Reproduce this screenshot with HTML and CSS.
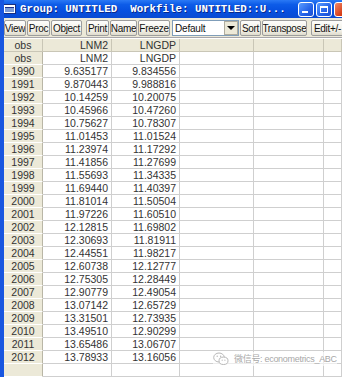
FILE: index.html
```html
<!DOCTYPE html>
<html>
<head>
<meta charset="utf-8">
<link rel="stylesheet" href="styles.css">
</head>
<body>
<div class="win">
  <div class="titlebar">
    <span class="ticon"><span class="tin"></span></span>
    <span class="ttext">Group: UNTITLED  Workfile: UNTITLED::U...</span>
    <span class="wbtns">
      <span class="wb wmin"><span class="minbar"></span></span>
      <span class="wb wmax"><span class="maxbox"></span></span>
      <span class="wb wclose"></span>
    </span>
  </div>
  <div class="toolbar">
    <span class="btn w22">View</span>
    <span class="btn w23">Proc</span>
    <span class="btn w31">Object</span>
    <span class="btn w23 gap4">Print</span>
    <span class="btn w27">Name</span>
    <span class="btn w32">Freeze</span>
    <span class="combo"><span class="ctext">Default</span><span class="carrow"><span class="tri"></span></span></span>
    <span class="btn w21">Sort</span>
    <span class="btn w45">Transpose</span>
    <span class="btn w33 gap4">Edit+/-</span>
    <span class="btn w10 gap2"></span>
  </div>
  <div class="grid" id="grid">
    <div class="row head"><div class="c obs">obs</div><div class="c">LNM2</div><div class="c">LNGDP</div><div class="c"></div><div class="c"></div><div class="c"></div></div>
    <div class="row"><div class="c obs">obs</div><div class="c">LNM2</div><div class="c">LNGDP</div><div class="c"></div><div class="c"></div><div class="c"></div></div>
    <div class="row"><div class="c obs">1990</div><div class="c">9.635177</div><div class="c">9.834556</div><div class="c"></div><div class="c"></div><div class="c"></div></div>
    <div class="row"><div class="c obs">1991</div><div class="c">9.870443</div><div class="c">9.988816</div><div class="c"></div><div class="c"></div><div class="c"></div></div>
    <div class="row"><div class="c obs">1992</div><div class="c">10.14259</div><div class="c">10.20075</div><div class="c"></div><div class="c"></div><div class="c"></div></div>
    <div class="row"><div class="c obs">1993</div><div class="c">10.45966</div><div class="c">10.47260</div><div class="c"></div><div class="c"></div><div class="c"></div></div>
    <div class="row"><div class="c obs">1994</div><div class="c">10.75627</div><div class="c">10.78307</div><div class="c"></div><div class="c"></div><div class="c"></div></div>
    <div class="row"><div class="c obs">1995</div><div class="c">11.01453</div><div class="c">11.01524</div><div class="c"></div><div class="c"></div><div class="c"></div></div>
    <div class="row"><div class="c obs">1996</div><div class="c">11.23974</div><div class="c">11.17292</div><div class="c"></div><div class="c"></div><div class="c"></div></div>
    <div class="row"><div class="c obs">1997</div><div class="c">11.41856</div><div class="c">11.27699</div><div class="c"></div><div class="c"></div><div class="c"></div></div>
    <div class="row"><div class="c obs">1998</div><div class="c">11.55693</div><div class="c">11.34335</div><div class="c"></div><div class="c"></div><div class="c"></div></div>
    <div class="row"><div class="c obs">1999</div><div class="c">11.69440</div><div class="c">11.40397</div><div class="c"></div><div class="c"></div><div class="c"></div></div>
    <div class="row"><div class="c obs">2000</div><div class="c">11.81014</div><div class="c">11.50504</div><div class="c"></div><div class="c"></div><div class="c"></div></div>
    <div class="row"><div class="c obs">2001</div><div class="c">11.97226</div><div class="c">11.60510</div><div class="c"></div><div class="c"></div><div class="c"></div></div>
    <div class="row"><div class="c obs">2002</div><div class="c">12.12815</div><div class="c">11.69802</div><div class="c"></div><div class="c"></div><div class="c"></div></div>
    <div class="row"><div class="c obs">2003</div><div class="c">12.30693</div><div class="c">11.81911</div><div class="c"></div><div class="c"></div><div class="c"></div></div>
    <div class="row"><div class="c obs">2004</div><div class="c">12.44551</div><div class="c">11.98217</div><div class="c"></div><div class="c"></div><div class="c"></div></div>
    <div class="row"><div class="c obs">2005</div><div class="c">12.60738</div><div class="c">12.12777</div><div class="c"></div><div class="c"></div><div class="c"></div></div>
    <div class="row"><div class="c obs">2006</div><div class="c">12.75305</div><div class="c">12.28449</div><div class="c"></div><div class="c"></div><div class="c"></div></div>
    <div class="row"><div class="c obs">2007</div><div class="c">12.90779</div><div class="c">12.49054</div><div class="c"></div><div class="c"></div><div class="c"></div></div>
    <div class="row"><div class="c obs">2008</div><div class="c">13.07142</div><div class="c">12.65729</div><div class="c"></div><div class="c"></div><div class="c"></div></div>
    <div class="row"><div class="c obs">2009</div><div class="c">13.31501</div><div class="c">12.73935</div><div class="c"></div><div class="c"></div><div class="c"></div></div>
    <div class="row"><div class="c obs">2010</div><div class="c">13.49510</div><div class="c">12.90299</div><div class="c"></div><div class="c"></div><div class="c"></div></div>
    <div class="row"><div class="c obs">2011</div><div class="c">13.65486</div><div class="c">13.06707</div><div class="c"></div><div class="c"></div><div class="c"></div></div>
    <div class="row"><div class="c obs">2012</div><div class="c">13.78933</div><div class="c">13.16056</div><div class="c"></div><div class="c"></div><div class="c"></div></div>
    <div class="row"><div class="c obs"></div><div class="c"></div><div class="c"></div><div class="c"></div><div class="c"></div><div class="c"></div></div>
    <div class="watermark">
      <svg width="16" height="14" viewBox="0 0 16 14">
        <ellipse cx="6" cy="5.5" rx="5.3" ry="4.5" fill="none" stroke="#b8b8b8" stroke-width="1"/>
        <ellipse cx="10.5" cy="8.8" rx="4.5" ry="3.7" fill="#fff" stroke="#b8b8b8" stroke-width="1"/>
        <circle cx="4.2" cy="4.2" r="0.7" fill="#b8b8b8"/>
        <circle cx="7.6" cy="4.2" r="0.7" fill="#b8b8b8"/>
        <circle cx="9.2" cy="8.2" r="0.6" fill="#b8b8b8"/>
        <circle cx="11.9" cy="8.2" r="0.6" fill="#b8b8b8"/>
      </svg>
      <span class="wmtext">微信号: econometrics_ABC</span>
    </div>
  </div>
</div>
</body>
</html>
```
FILE: styles.css
```css
html, body { margin: 0; padding: 0; background: #fff; }
body { width: 342px; height: 377px; overflow: hidden; font-family: "Liberation Sans", Arial, sans-serif; }
.win {
  width: 342px; height: 377px; overflow: hidden;
  display: flex; flex-direction: column;
  border-left: 4px solid #1856e0;
  box-sizing: border-box;
  background: #fff;
}
.titlebar {
  height: 18px; flex: none;
  margin-left: -4px;
  display: flex; align-items: center;
  background: linear-gradient(#2a79f5 0%, #0d5ce8 25%, #0650e0 60%, #0a4bd2 100%);
  color: #fff;
}
.ticon {
  width: 13px; height: 10px; margin-left: 3px; flex: none;
  background: #fff; border: 1px solid #1a2f80; box-sizing: border-box;
  display: flex; padding: 2px 1px 1px 1px;
}
.tin { flex: 1; background: #7f9ed8; border-top: 1px solid #20308a; }
.ttext {
  margin-left: 4px; font-family: "Liberation Mono", "Courier New", monospace;
  font-weight: bold; font-size: 10.8px; white-space: pre; letter-spacing: 0;
  text-shadow: 1px 1px 0 #0a2a8a;
  flex: 1; overflow: hidden;
}
.wbtns { display: flex; gap: 2px; margin-right: -8px; flex: none; }
.wb {
  width: 16px; height: 15px; box-sizing: border-box;
  border: 1px solid #fff; border-radius: 3px;
  background: linear-gradient(135deg, #5a9cff, #2563e8 60%, #1d50d0);
  display: flex; align-items: center; justify-content: center;
}
.wmin { align-items: flex-end; }
.minbar { width: 6px; height: 2px; background: #fff; margin-bottom: 3px; margin-right: 3px; }
.maxbox { width: 8px; height: 7px; border: 1px solid #fff; border-top-width: 2px; box-sizing: border-box; }
.wclose { background: linear-gradient(135deg, #f08a6a, #d8401a 60%, #c03010); }

.toolbar {
  height: 20px; flex: none; box-sizing: border-box;
  display: flex; align-items: center; gap: 1px;
  background: #ece9d8;
  padding-top: 1px;
  border-bottom: 1px solid #a7a6aa;
  white-space: nowrap; overflow: hidden;
}
.btn {
  height: 16px; box-sizing: border-box; flex: none;
  border: 1px solid #9d9d9d; border-radius: 2px;
  background: linear-gradient(#fdfdfb, #f1efe6 70%, #dedbcc);
  font-size: 10px; letter-spacing: -0.3px; color: #111;
  display: flex; align-items: center; justify-content: center;
  overflow: hidden;
}
.w10 { width: 10px; }
.w21 { width: 21px; } .w22 { width: 22px; } .w23 { width: 23px; }
.w27 { width: 27px; } .w31 { width: 31px; } .w32 { width: 32px; }
.w33 { width: 33px; } .w45 { width: 45px; }
.gap4 { margin-left: 3px; } .gap2 { margin-left: 1px; }
.combo {
  width: 67px; height: 16px; box-sizing: border-box; flex: none; margin-left: 1px;
  border: 1px solid #7f9db9; background: #fff;
  display: flex; align-items: center;
}
.ctext { flex: 1; font-size: 10px; letter-spacing: -0.2px; padding-left: 2px; color: #111; }
.carrow {
  width: 14px; height: 14px; box-sizing: border-box;
  background: #ece9d8; border: 1px solid #b0ad9f;
  display: flex; align-items: center; justify-content: center;
}
.tri { width: 0; height: 0; border-left: 4px solid transparent; border-right: 4px solid transparent; border-top: 4px solid #000; }

.grid { position: relative; flex: 1; padding-top: 1px; }
.row {
  display: grid;
  grid-template-columns: 39px 69px 68px 74px 70px 1fr;
  height: 13px;
}
.c {
  box-sizing: border-box; height: 13px;
  border-right: 1px solid #cfcfcf; border-bottom: 1px solid #cfcfcf;
  font-size: 10.5px; line-height: 12px; color: #333;
  text-align: right; padding-right: 3px;
  white-space: nowrap; overflow: hidden;
}
.obs { background: #ece9d8; text-align: center; padding-right: 0; border-right-color: #b9b6a6; border-bottom-color: #fff; }
.head .c { background: #ece9d8; border-bottom-color: #c9c6b6; border-right-color: #c9c6b6; }
.watermark {
  position: absolute; left: 209px; top: 314px;
  display: flex; align-items: center; gap: 5px;
  white-space: nowrap;
  background: rgba(255,255,255,0.6);
  color: #a8a8a8; font-size: 9px; line-height: 12px; letter-spacing: -0.3px;
  font-family: "Liberation Sans", "Noto Sans CJK SC", sans-serif;
}
.wmtext { white-space: nowrap; font-family: "Liberation Sans", "Noto Sans CJK SC", sans-serif; }
```
